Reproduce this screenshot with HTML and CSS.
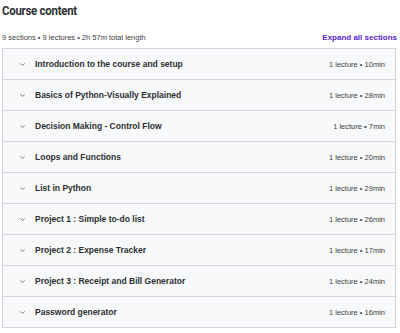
FILE: index.html
```html
<!DOCTYPE html>
<html lang="en">
<head>
  <meta charset="UTF-8">
  <title>Course content</title>
  <link rel="stylesheet" href="styles.css">
</head>
<body>

  <h2 class="titulo"><span>Course content</span></h2>

  <div class="resumo">
    <span>9 sections • 9 lectures • 2h 57m total length</span>
    <a class="expandir" href="#">Expand all sections</a>
  </div>

  <div class="secoes">
    <div class="secao">
      <span class="seta"><svg width="7" height="5" viewBox="0 0 7 5"><path d="M1.3 1.4 L3.5 3.5 L5.7 1.4" fill="none" stroke="#6a6f73" stroke-width="0.9"/></svg></span>
      <span class="nome">Introduction to the course and setup</span>
      <span class="info">1 lecture • 10min</span>
    </div>
    <div class="secao">
      <span class="seta"><svg width="7" height="5" viewBox="0 0 7 5"><path d="M1.3 1.4 L3.5 3.5 L5.7 1.4" fill="none" stroke="#6a6f73" stroke-width="0.9"/></svg></span>
      <span class="nome">Basics of Python-Visually Explained</span>
      <span class="info">1 lecture • 28min</span>
    </div>
    <div class="secao">
      <span class="seta"><svg width="7" height="5" viewBox="0 0 7 5"><path d="M1.3 1.4 L3.5 3.5 L5.7 1.4" fill="none" stroke="#6a6f73" stroke-width="0.9"/></svg></span>
      <span class="nome">Decision Making - Control Flow</span>
      <span class="info">1 lecture • 7min</span>
    </div>
    <div class="secao">
      <span class="seta"><svg width="7" height="5" viewBox="0 0 7 5"><path d="M1.3 1.4 L3.5 3.5 L5.7 1.4" fill="none" stroke="#6a6f73" stroke-width="0.9"/></svg></span>
      <span class="nome">Loops and Functions</span>
      <span class="info">1 lecture • 20min</span>
    </div>
    <div class="secao">
      <span class="seta"><svg width="7" height="5" viewBox="0 0 7 5"><path d="M1.3 1.4 L3.5 3.5 L5.7 1.4" fill="none" stroke="#6a6f73" stroke-width="0.9"/></svg></span>
      <span class="nome">List in Python</span>
      <span class="info">1 lecture • 29min</span>
    </div>
    <div class="secao">
      <span class="seta"><svg width="7" height="5" viewBox="0 0 7 5"><path d="M1.3 1.4 L3.5 3.5 L5.7 1.4" fill="none" stroke="#6a6f73" stroke-width="0.9"/></svg></span>
      <span class="nome">Project 1 : Simple to-do list</span>
      <span class="info">1 lecture • 26min</span>
    </div>
    <div class="secao">
      <span class="seta"><svg width="7" height="5" viewBox="0 0 7 5"><path d="M1.3 1.4 L3.5 3.5 L5.7 1.4" fill="none" stroke="#6a6f73" stroke-width="0.9"/></svg></span>
      <span class="nome">Project 2 : Expense Tracker</span>
      <span class="info">1 lecture • 17min</span>
    </div>
    <div class="secao">
      <span class="seta"><svg width="7" height="5" viewBox="0 0 7 5"><path d="M1.3 1.4 L3.5 3.5 L5.7 1.4" fill="none" stroke="#6a6f73" stroke-width="0.9"/></svg></span>
      <span class="nome">Project 3 : Receipt and Bill Generator</span>
      <span class="info">1 lecture • 24min</span>
    </div>
    <div class="secao">
      <span class="seta"><svg width="7" height="5" viewBox="0 0 7 5"><path d="M1.3 1.4 L3.5 3.5 L5.7 1.4" fill="none" stroke="#6a6f73" stroke-width="0.9"/></svg></span>
      <span class="nome">Password generator</span>
      <span class="info">1 lecture • 16min</span>
    </div>
  </div>

</body>
</html>
```

FILE: styles.css
```css
body {
  font-family: "Liberation Sans", Arial, sans-serif;
  background-color: #ffffff;
  color: #2d2f31;
  margin: 0;
  padding: 0 3px 0 2px;
}

.titulo {
  font-family: Roboto, "Liberation Sans", sans-serif;
  font-size: 13px;
  font-weight: bold;
  letter-spacing: -0.3px;
  margin: 0;
  padding-top: 2px;
  line-height: 17px;
}

.titulo span {
  display: inline-block;
  transform: scaleX(0.88);
  transform-origin: left center;
}

.resumo {
  display: flex;
  justify-content: space-between;
  align-items: center;
  font-size: 7.5px;
  color: #3e4143;
  margin-top: 13px;
  height: 11px;
  margin-bottom: 5px;
}

.expandir {
  color: #5624d0;
  font-weight: bold;
  font-size: 8px;
  text-decoration: none;
}

.secoes {
  border: 1px solid #d1d7dc;
  margin-right: 1px;
}

.secao {
  display: flex;
  align-items: center;
  height: 30px;
  background: #f7f9fa;
  border-top: 1px solid #d1d7dc;
  padding: 0 10px 0 16px;
}

.secao:first-child {
  border-top: none;
}

.seta {
  display: flex;
  width: 16px;
}

.nome {
  flex: 1;
  font-size: 8.5px;
  font-weight: bold;
}

.info {
  font-size: 7.5px;
  color: #3e4143;
}
```
